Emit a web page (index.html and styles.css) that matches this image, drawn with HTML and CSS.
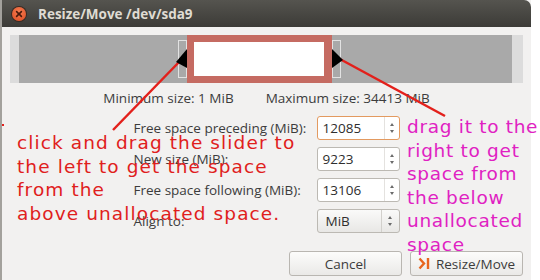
FILE: index.html
```html
<!DOCTYPE html>
<html>
<head>
    <meta charset="UTF-8">
    <title>Resize/Move /dev/sda9</title>
    <link rel="stylesheet" href="styles.css">
</head>
<body>
<div class="window">
    <div class="titlebar">
        <span class="close">
            <svg width="14" height="14" viewBox="0 0 14 14">
                <path d="M4.6 4.6 L9.4 9.4 M9.4 4.6 L4.6 9.4" stroke="#4a1a0c" stroke-width="1.6" stroke-linecap="round"/>
            </svg>
        </span>
        <span class="title">Resize/Move /dev/sda9</span>
    </div>

    <div class="content">
        <div class="slider">
            <div class="edge"></div>
            <div class="free"></div>
            <div class="handle"><div class="grip"></div></div>
            <div class="part"><div class="part-inner"></div></div>
            <div class="handle"><div class="grip"></div></div>
            <div class="free"></div>
            <div class="edge"></div>
        </div>

        <div class="limits">
            <span>Minimum size: 1 MiB</span>
            <span>Maximum size: 34413 MiB</span>
        </div>

        <div class="form">
            <label>Free space preceding (MiB):</label>
            <div class="spin focus">
                <span class="val">12085</span>
                <span class="steps"><i class="up"></i><i class="down"></i></span>
            </div>

            <label>New size (MiB):</label>
            <div class="spin">
                <span class="val">9223</span>
                <span class="steps"><i class="up"></i><i class="down"></i></span>
            </div>

            <label>Free space following (MiB):</label>
            <div class="spin">
                <span class="val">13106</span>
                <span class="steps"><i class="up"></i><i class="down"></i></span>
            </div>

            <label>Align to:</label>
            <div class="spin combo">
                <span class="val">MiB</span>
                <span class="steps"><i class="up"></i><i class="down"></i></span>
            </div>
        </div>

        <div class="buttons">
            <button type="button" class="btn">Cancel</button>
            <button type="button" class="btn">
                <svg width="13" height="13" viewBox="0 0 13 13">
                    <path d="M1.5 1.5 L6 6.5 L1.5 11.5" fill="none" stroke="#e8661e" stroke-width="2.4"/>
                    <path d="M10 1 L10 12" stroke="#e8661e" stroke-width="2.4"/>
                </svg>
                Resize/Move
            </button>
        </div>
    </div>

    <!-- annotations drawn over the dialog -->
    <svg class="marks" width="540" height="280" viewBox="0 0 540 280">
        <line x1="113" y1="130" x2="181" y2="60" stroke="#e3201b" stroke-width="2.5"/>
        <polygon points="187,49 187,68 176,62" fill="#000"/>
        <line x1="445" y1="116" x2="338" y2="58" stroke="#e3201b" stroke-width="2.5"/>
        <polygon points="332,49 332,68 343,60" fill="#000"/>
        <rect x="2" y="124" width="2" height="2" fill="#e3201b"/>
    </svg>

    <div class="note note-red">click and drag the slider to<br>the left to get the space<br>from the<br>above unallocated space.</div>
    <div class="note note-pink">drag it to the<br>right to get<br>space from<br>the below<br>unallocated<br>space</div>
</div>
</body>
</html>
```

FILE: styles.css
```css
body {
    margin: 0;
    background-color: #ffffff;
    font-family: "Open Sans", "DejaVu Sans", sans-serif;
}

.window {
    position: relative;
    width: 529px;
    height: 280px;
    background-color: #f2f1f0;
    border-left: 2px solid #a3a19c;
    overflow: visible;
}

.titlebar {
    height: 27px;
    display: flex;
    align-items: center;
    gap: 12px;
    padding-left: 10px;
    background: linear-gradient(#55544f, #3c3b37);
    border-radius: 0 7px 0 0;
}

.close {
    width: 14px;
    height: 14px;
    border-radius: 50%;
    background: radial-gradient(circle at 50% 35%, #f57d52, #de4a20);
    box-shadow: 0 0 0 1px #3a2a22;
    display: flex;
}

.title {
    color: #dfdbd2;
    font-weight: bold;
    font-size: 13.5px;
}

.content {
    padding: 8px 8px 0 8px;
}

.slider {
    display: grid;
    grid-template-columns: 9px 159px 9px 145px 9px 171px 11px;
    height: 48px;
    background-color: #dcdcdc;
}

.free,
.handle {
    background-color: #a9a9a9;
}

.handle {
    padding: 5px 0;
}

.grip {
    height: 100%;
    box-sizing: border-box;
    border: 1px solid #e2e2e2;
}

.part {
    background-color: #c56b62;
    padding: 7px 8px 7px 7px;
}

.part-inner {
    height: 100%;
    background-color: #ffffff;
}

.limits {
    display: flex;
    justify-content: center;
    gap: 32px;
    margin-top: 7px;
    font-size: 13.5px;
    line-height: 16px;
    color: #3c3c3c;
}

.form {
    display: grid;
    grid-template-columns: 175px 83px;
    column-gap: 8px;
    row-gap: 7px;
    justify-content: center;
    margin-top: 10px;
}

.form label {
    font-size: 13.5px;
    color: #3c3c3c;
    line-height: 24px;
    white-space: nowrap;
}

.spin {
    height: 24px;
    box-sizing: border-box;
    display: flex;
    background-color: #ffffff;
    border: 1px solid #bcb9b3;
    border-radius: 3px;
}

.spin.focus {
    border-color: #e39a60;
}

.spin.combo {
    background: linear-gradient(#fafaf9, #e8e7e5);
}

.val {
    flex: 1;
    padding-left: 5px;
    font-size: 13.5px;
    line-height: 22px;
    color: #2e2e2e;
}

.combo .val {
    padding-left: 8px;
}

.steps {
    width: 14px;
    border-left: 1px solid #e4e2df;
    display: flex;
    flex-direction: column;
    align-items: center;
    justify-content: center;
    gap: 4px;
}

.combo .steps {
    width: 17px;
    border-left-color: #d2d0cc;
}

.up,
.down {
    width: 0;
    height: 0;
    border-left: 2.5px solid transparent;
    border-right: 2.5px solid transparent;
}

.up {
    border-bottom: 3px solid #6b6b6b;
}

.down {
    border-top: 3px solid #6b6b6b;
}

.buttons {
    display: flex;
    justify-content: flex-end;
    gap: 8px;
    margin-top: 18px;
}

.btn {
    width: 113px;
    height: 25px;
    display: flex;
    align-items: center;
    justify-content: center;
    gap: 5px;
    font-family: "Open Sans", "DejaVu Sans", sans-serif;
    font-size: 13.5px;
    color: #3c3c3c;
    background: linear-gradient(#fcfcfb, #eae9e7);
    border: 1px solid #b9b6b1;
    border-radius: 3px;
    padding: 0;
}

.marks {
    position: absolute;
    left: -2px;
    top: 0;
}

.note {
    position: absolute;
    font-family: "DejaVu Sans", sans-serif;
    font-size: 18.5px;
    line-height: 23.5px;
    letter-spacing: 1.1px;
    white-space: nowrap;
}

.note-red {
    left: 15px;
    top: 131px;
    color: #e0201c;
}

.note-pink {
    left: 405px;
    top: 115px;
    color: #e021c2;
    letter-spacing: 0.7px;
}
```
